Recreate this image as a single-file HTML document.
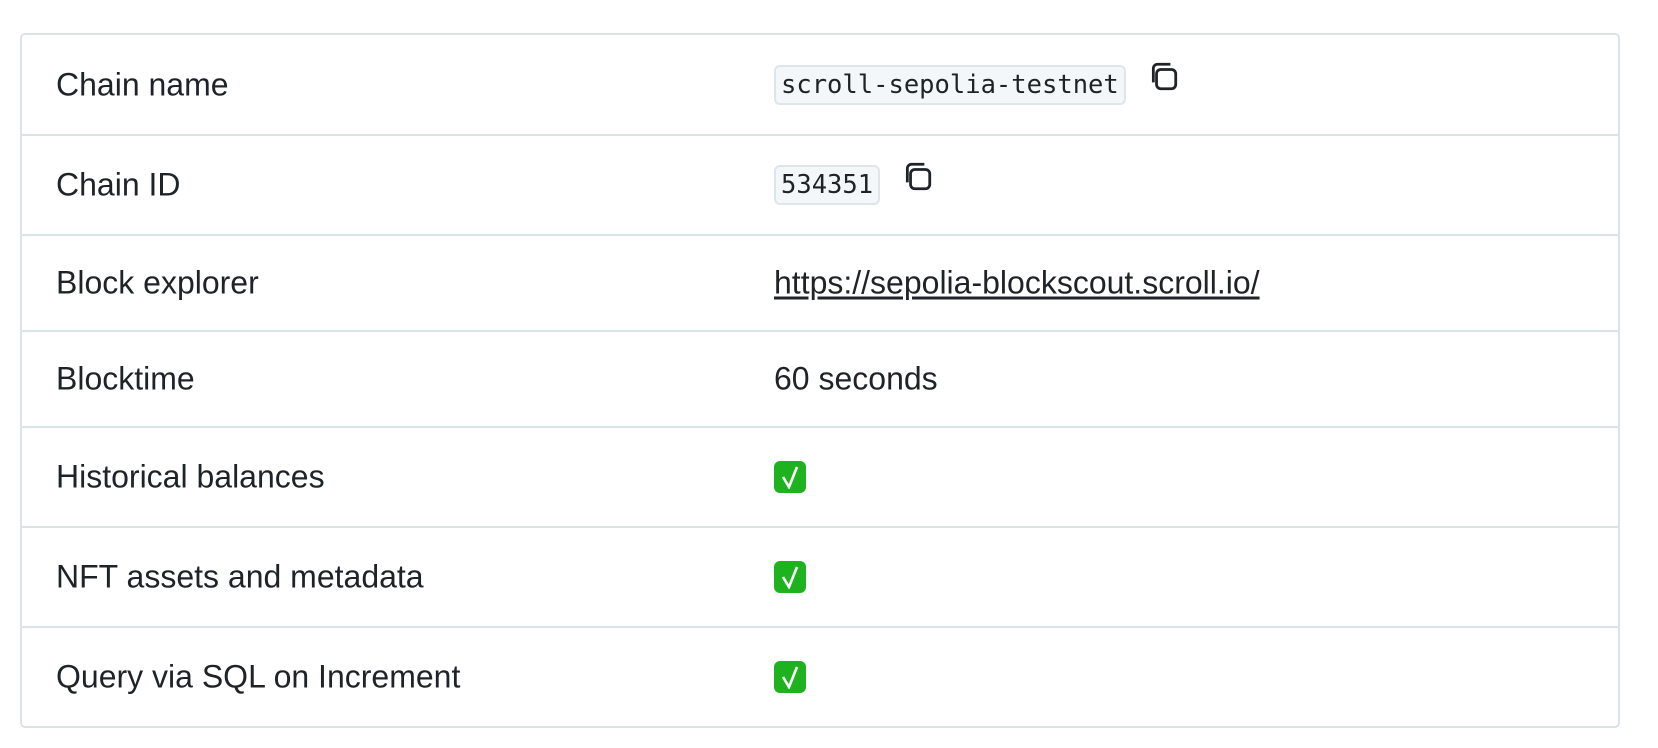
<!DOCTYPE html>
<html><head><meta charset="utf-8"><style>
body{margin:0;background:#fff;font-family:"Liberation Sans",sans-serif;color:#1f2328;}
.t{position:absolute;left:20px;top:33px;width:1600px;border:2px solid #dce3e6;border-radius:5px;box-sizing:border-box;}
.r{position:relative;border-top:2px solid #dce3e6;box-sizing:border-box;}
.r:first-child{border-top:none}
.l{position:absolute;left:34px;top:50%;transform:translateY(-50%);font-size:32px;}
.v{position:absolute;left:752px;top:50%;transform:translateY(-50%);font-size:32px;display:flex;align-items:center;}
code{font-family:"DejaVu Sans Mono","Liberation Mono",monospace;font-size:25.5px;background:#f4f7fa;border:2px solid #dfe6ea;border-radius:6px;padding:3px 5px;}
a{color:#1f2328;text-decoration:underline;text-underline-offset:3px;}
.ck{width:32px;height:32px;background:#1eb21e;border-radius:6px;display:flex;align-items:center;justify-content:center;}
</style></head><body>
<div class="t">
<div class="r" style="height:99px"><div class="l">Chain name</div><div class="v"><code>scroll-sepolia-testnet</code><svg style="margin-left:22px;margin-top:-16px" width="32" height="32" viewBox="0 0 30 30" fill="none" stroke="#1f2328" stroke-width="2.6"><rect x="8" y="8" width="18" height="18" rx="4"/><path d="M5 20V7a4 4 0 0 1 4-4h12"/></svg></div></div>
<div class="r" style="height:100px"><div class="l">Chain ID</div><div class="v"><code>534351</code><svg style="margin-left:22px;margin-top:-16px" width="32" height="32" viewBox="0 0 30 30" fill="none" stroke="#1f2328" stroke-width="2.6"><rect x="8" y="8" width="18" height="18" rx="4"/><path d="M5 20V7a4 4 0 0 1 4-4h12"/></svg></div></div>
<div class="r" style="height:96px"><div class="l">Block explorer</div><div class="v"><a>https://sepolia-blockscout.scroll.io/</a></div></div>
<div class="r" style="height:96px"><div class="l">Blocktime</div><div class="v">60 seconds</div></div>
<div class="r" style="height:100px"><div class="l">Historical balances</div><div class="v"><div class="ck"><svg width="22" height="24" viewBox="0 0 22 24"><path d="M4 12l6 10L18 2" fill="none" stroke="#fff" stroke-width="2.6"/></svg></div></div></div>
<div class="r" style="height:100px"><div class="l">NFT assets and metadata</div><div class="v"><div class="ck"><svg width="22" height="24" viewBox="0 0 22 24"><path d="M4 12l6 10L18 2" fill="none" stroke="#fff" stroke-width="2.6"/></svg></div></div></div>
<div class="r" style="height:100px"><div class="l">Query via SQL on Increment</div><div class="v"><div class="ck"><svg width="22" height="24" viewBox="0 0 22 24"><path d="M4 12l6 10L18 2" fill="none" stroke="#fff" stroke-width="2.6"/></svg></div></div></div>
</div>
</body></html>
